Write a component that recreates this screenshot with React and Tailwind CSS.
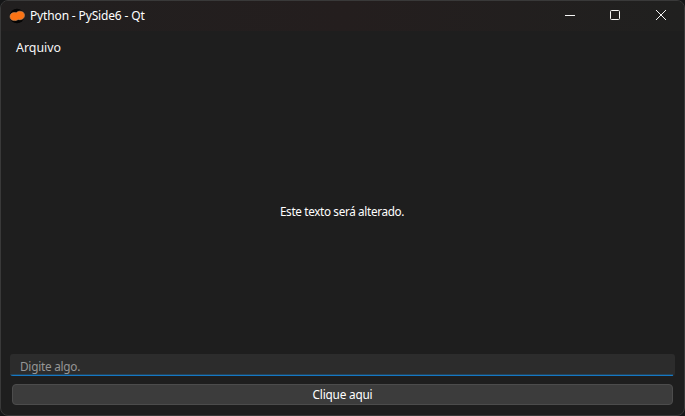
import React from 'react';

function AppIcon() {
  return (
    <svg width="16" height="16" viewBox="0 0 16 16" aria-hidden="true">
      <circle cx="8" cy="8" r="7.3" fill="#050505" />
      <path
        d="M1 8.600C1 6 3 4.600 5.200 4.600c.8 0 1.400.1 2 .2C8 3.800 9.500 3.200 11 3.200c2.500 0 4.500 1.600 4.500 4.100 0 2.700-2 4.400-4.400 4.400-.8 0-1.400-.1-2-.2-.8.700-2 1.100-3.500 1.100C2.900 12.600 1 11 1 8.600Z"
        fill="#fb7314"
        stroke="#cc9468"
        strokeWidth=".6"
      />
    </svg>
  );
}

function TitleBar() {
  return (
    <header className="flex h-[30px] items-center bg-linear-to-r from-[#211f1f] via-[#241e1e] to-[#20201f] pl-2">
      <AppIcon />
      <h1 className="ml-[5px] whitespace-nowrap text-[12px] leading-4 tracking-[-0.15px] text-white">Python - PySide6 - Qt</h1>
      <div className="ml-auto flex h-full pb-[2px] text-[#f5f5f5]">
        <button aria-label="Minimizar" className="flex h-full w-[46px] items-center justify-center">
          <svg width="12" height="12" viewBox="0 0 12 12" stroke="currentColor" fill="none"><path d="M2 6.5h10" /></svg>
        </button>
        <button aria-label="Maximizar" className="flex h-full w-[46px] items-center justify-center">
          <svg width="12" height="12" viewBox="0 0 12 12" stroke="currentColor" fill="none"><rect x="1.5" y="1.5" width="9" height="9" rx="1" /></svg>
        </button>
        <button aria-label="Fechar" className="flex h-full w-[46px] items-center justify-center">
          <svg width="12" height="12" viewBox="0 0 12 12" stroke="currentColor" fill="none"><path d="M1 1l10 10M11 1L1 11" /></svg>
        </button>
      </div>
    </header>
  );
}

export default function App() {
  return (
    <div className="h-[416px] w-[685px] overflow-hidden bg-[#151617] font-['Noto_Sans',sans-serif]">
      <div className="flex h-[416px] w-[685px] flex-col overflow-hidden rounded-lg border border-[#393939] bg-[#1e1e1e]">
        <TitleBar />
        <nav className="flex h-[34px] items-center pl-[15px]">
          <button className="text-[12.4px] leading-4 text-[#f5f5f5]">Arquivo</button>
        </nav>
        <main className="flex flex-1 flex-col px-[9px] pb-[10px]">
          <p className="flex flex-1 items-center justify-center pt-[5px] pr-px text-[11.7px] tracking-[-0.33px] text-white">Este texto será alterado.</p>
          <div className="flex h-[22px] w-[665px] flex-col overflow-hidden rounded-[3px] bg-[#2c2c2c]">
            <input
              placeholder="Digite algo."
              className="h-[20px] w-full px-[10px] pt-[3px] text-[11.8px] tracking-[-0.25px] text-white outline-none placeholder:text-[#969696]"
            />
            <div className="h-px w-[663px] bg-[#254459]" />
            <div className="h-px w-[663px] bg-[#1578c4]" />
          </div>
          <button className="mx-[2px] mt-2 flex h-[21px] items-center justify-center rounded-[4px] border border-[#4c4c4c] bg-[#3c3c3c] pb-px text-[11.8px] leading-4 tracking-[-0.2px] text-white">
            Clique aqui
          </button>
        </main>
      </div>
    </div>
  );
}
